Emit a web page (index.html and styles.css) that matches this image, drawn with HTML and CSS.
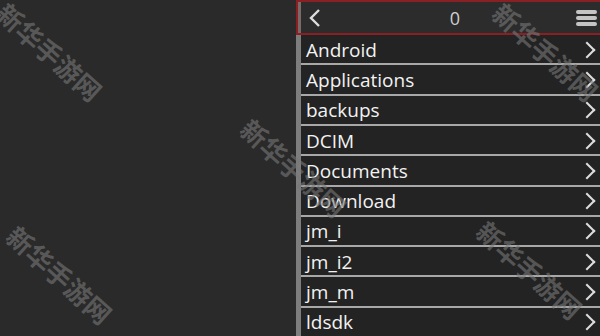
FILE: index.html
```html
<!DOCTYPE html>
<html lang="en">
<head>
  <meta charset="UTF-8" />
  <title>Folders</title>
  <link rel="stylesheet" href="styles.css">
</head>
<body>
  <div class="screen">
    <div class="blank"></div>

    <!-- Folder browser -->
    <div class="browser">
      <div class="topbar">
        <span class="back">
          <svg width="14" height="20" viewBox="0 0 14 20"><path d="M11 2 L3 10 L11 18" fill="none" stroke="#ddd" stroke-width="2.4"/></svg>
        </span>
        <span class="count">0</span>
        <span class="menu">
          <i></i><i></i><i></i>
        </span>
      </div>
      <div class="list">
        <div class="row"><span>Android</span><b class="chev"></b></div>
        <div class="row"><span>Applications</span><b class="chev"></b></div>
        <div class="row"><span>backups</span><b class="chev"></b></div>
        <div class="row"><span>DCIM</span><b class="chev"></b></div>
        <div class="row"><span>Documents</span><b class="chev"></b></div>
        <div class="row"><span>Download</span><b class="chev"></b></div>
        <div class="row"><span>jm_i</span><b class="chev"></b></div>
        <div class="row"><span>jm_i2</span><b class="chev"></b></div>
        <div class="row"><span>jm_m</span><b class="chev"></b></div>
        <div class="row"><span>ldsdk</span><b class="chev"></b></div>
      </div>
    </div>

    <!-- watermarks -->
    <div class="wm wm1">新华手游网</div>
    <div class="wm wm2">新华手游网</div>
    <div class="wm wm3">新华手游网</div>
    <div class="wm wm4">新华手游网</div>
    <div class="wm wm5">新华手游网</div>
  </div>
</body>
</html>
```

FILE: styles.css
```css
body { margin:0; background:#2a2a2a; font-family:"Open Sans", "Noto Sans", sans-serif; overflow:hidden; }
.screen { position:relative; width:600px; height:336px; display:flex; overflow:hidden; }
.blank { width:296px; flex:none; }
.browser { flex:1; display:flex; flex-direction:column; }
/* top bar */
.topbar { height:32px; border:2px solid #8a1f24; border-right:none; background:#2c2c2c; display:flex; align-items:center; position:relative; box-shadow:inset 3px 0 0 #7a6a6a; }
.back { width:26px; padding-left:10px; display:flex; align-items:center; }
.count { flex:1; text-align:center; color:#cfcfcf; font-size:18px; }
.menu { width:21px; display:flex; flex-direction:column; gap:2px; padding-right:3px; }
.menu i { display:block; height:4px; border-radius:2px; background:#c4c4c4; }
/* list */
.list { flex:1; border-left:5px solid #7d7d7d; background:#232323; }
.row { height:27.3px; padding-top:1px; display:flex; align-items:center; justify-content:space-between; padding-left:5px; border-bottom:2px solid #a8a8a8; color:#f2f2f2; font-size:19px; }
.row:last-child { border-bottom:none; }
.chev { width:10px; height:10px; border-top:2px solid #ddd; border-right:2px solid #ddd; transform:rotate(45deg); margin-right:7px; }
/* watermark */
.wm { position:absolute; color:rgba(120,120,120,0.6); font-family:"Noto Sans CJK SC", sans-serif; font-weight:700; font-size:26px; transform:rotate(42deg); transform-origin:left top; white-space:nowrap; }
.wm1 { left:14px; top:-6px; }
.wm2 { left:258px; top:110px; }
.wm3 { left:24px; top:217px; }
.wm4 { left:510px; top:-6px; }
.wm5 { left:494px; top:212px; }
```
